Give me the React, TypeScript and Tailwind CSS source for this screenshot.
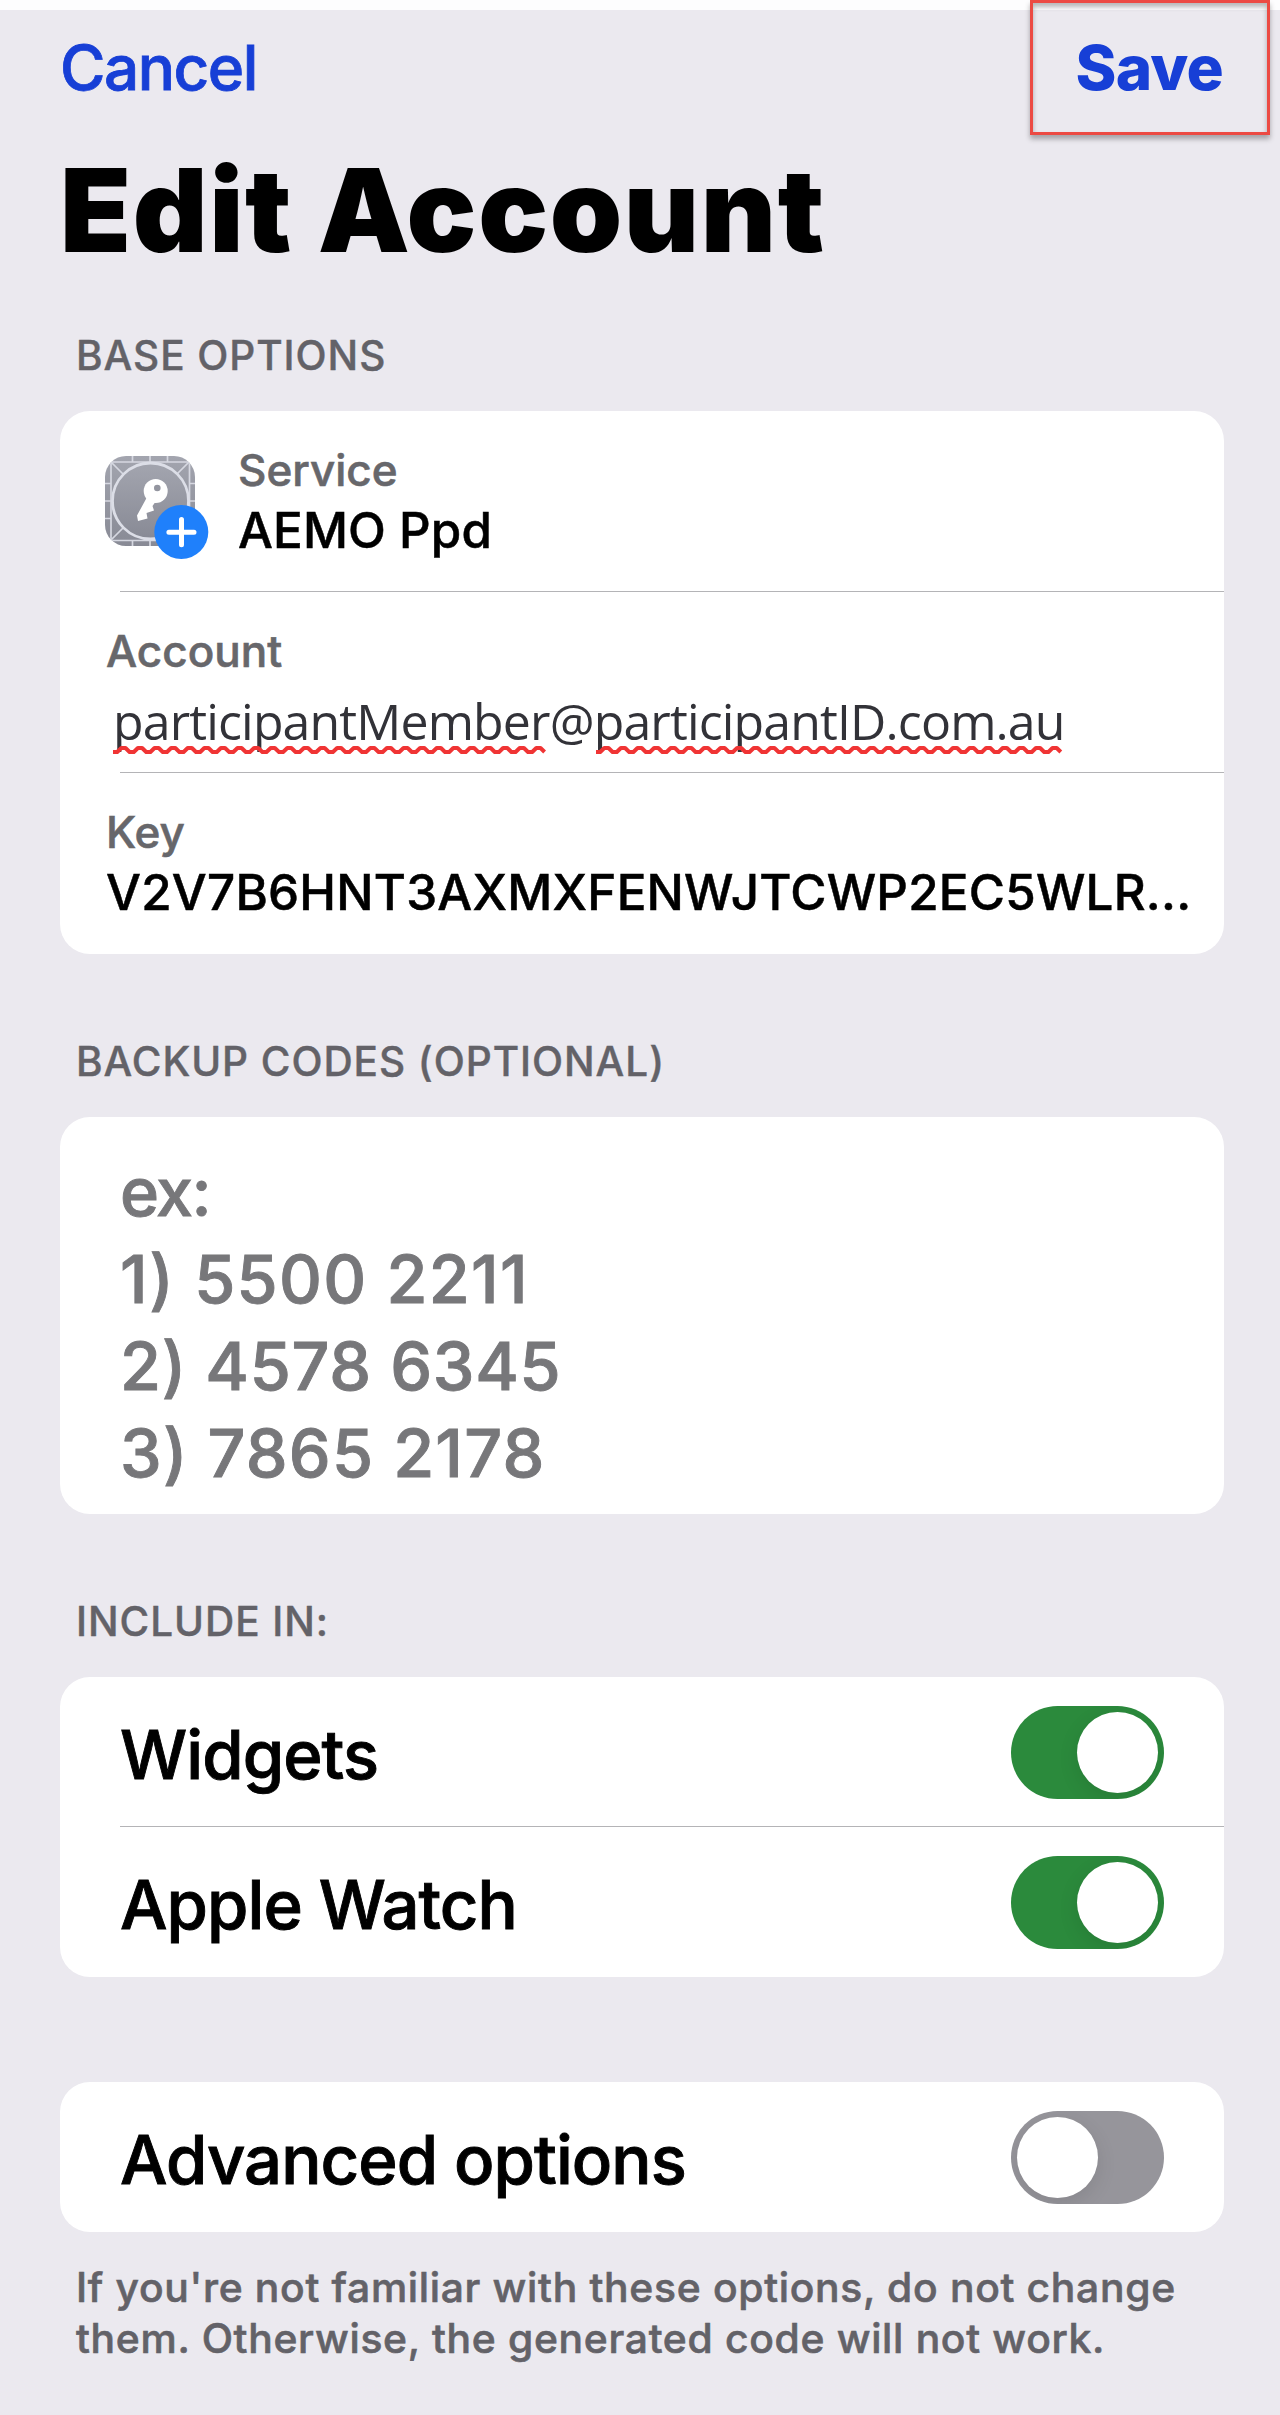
import { useState } from 'react';
import type { ReactNode } from 'react';

const backupPlaceholder = [
  { text: 'ex:', tracking: 'tracking-[-1.6px]' },
  { text: '1) 5500 2211', tracking: 'tracking-[1.3px]' },
  { text: '2) 4578 6345', tracking: 'tracking-[0.7px]' },
  { text: '3) 7865 2178', tracking: 'tracking-[1.2px]' }
];

function ServiceIcon() {
  return (
    <svg width="104" height="104" viewBox="0 0 104 104" className="shrink-0">
      <defs>
        <linearGradient id="tile" x1="0" y1="0" x2="0" y2="1">
          <stop offset="0" stopColor="#a3a5af" />
          <stop offset="1" stopColor="#888a95" />
        </linearGradient>
        <clipPath id="tile-clip">
          <rect width="90" height="90" rx="21" />
        </clipPath>
      </defs>
      <g clipPath="url(#tile-clip)">
        <rect width="90" height="90" fill="url(#tile)" />
        <g stroke="#d6d8e1" strokeWidth="1.7" fill="none">
          <path d="M6 0V90M84.5 0V90M0 6H90M0 84.5H90" />
          <path d="M27.5 0V6M45 0V6M62.5 0V6M27.5 84V90M45 84V90M62.5 84V90" />
          <path d="M0 27.5H6M0 45H6M0 62.5H6M84 27.5H90M84 45H90M84 62.5H90" />
          <path d="M6 6L18 18M84 6L72 18M6 84L18 72M84 84L72 72" />
        </g>
        <circle cx="45.5" cy="45" r="38" fill="url(#tile)" stroke="#dcdee7" strokeWidth="2.8" />
      </g>
      {/* Key */}
      <path
        d="M41 43L32 59.5L33 65L42.5 62.5L41.5 57L49 54.5L47.5 50L50 46.5L58 44L46 33Z"
        fill="#fff"
      />
      <circle cx="50.7" cy="35" r="12" fill="#fff" />
      <circle cx="52.3" cy="32" r="3.3" fill="#93959f" />
      {/* Add badge */}
      <circle cx="76.3" cy="76" r="27" fill="#1f80fb" />
      <path d="M76.5 63.5V88.7M63.9 76.3H89" stroke="#fff" strokeWidth="5" strokeLinecap="round" />
    </svg>
  );
}

function Squiggle({ width }: { width: number }) {
  const period = 16.6;
  let d = 'M0 7';
  for (let x = 0; x + period / 2 <= width; x += period) {
    d += ` L${(x + period / 4).toFixed(1)} 7 L${(x + period / 2).toFixed(1)} 3 L${(x + (period * 3) / 4).toFixed(1)} 3 L${(x + period).toFixed(1)} 7`;
  }
  return (
    <svg width={width} height="11" viewBox={`0 0 ${width} 11`} className="block">
      <path d={d} fill="none" stroke="#f03434" strokeWidth="4" strokeLinejoin="round" />
    </svg>
  );
}

function SectionLabel({ children }: { children: ReactNode }) {
  return (
    <h2 className="pl-4 pt-px mb-[31px] text-[40.5px] leading-[48px] font-medium tracking-[0.95px] text-[#636268] [-webkit-text-stroke:0.4px]">
      {children}
    </h2>
  );
}

function FieldLabel({ children }: { children: ReactNode }) {
  return (
    <div className="text-[44px] leading-[58px] font-medium text-[#67676b] [-webkit-text-stroke:0.6px]">
      {children}
    </div>
  );
}

function Divider() {
  return <div className="ml-[60px] h-px bg-[#b4b4b7]" />;
}

function Toggle({ on, onChange }: { on: boolean; onChange: (on: boolean) => void }) {
  return (
    <button
      role="switch"
      aria-checked={on}
      onClick={() => onChange(!on)}
      className={`flex w-[153px] h-[93px] p-1.5 rounded-full overflow-hidden ${
        on ? 'justify-end bg-[#2b8a3c]' : 'justify-start bg-[#96959b]'
      }`}
    >
      <span className="size-[81px] rounded-full bg-white shadow-[0_6px_20px_rgba(0,0,0,0.1)]" />
    </button>
  );
}

function ToggleRow({ label, on, onChange }: { label: string; on: boolean; onChange: (on: boolean) => void }) {
  return (
    <div className="flex h-[150px] items-center justify-between px-[60px]">
      <span className="pt-[5px] text-[67px] leading-[80px] font-medium tracking-[-0.95px] text-black [-webkit-text-stroke:0.9px]">
        {label}
      </span>
      <Toggle on={on} onChange={onChange} />
    </div>
  );
}

export default function App() {
  const [widgets, setWidgets] = useState(true);
  const [watch, setWatch] = useState(true);
  const [advanced, setAdvanced] = useState(false);

  return (
    <main className="w-[1280px] h-[2415px] overflow-hidden bg-[#ebe9ef] font-['Inter',sans-serif]">
      <div className="h-2.5 bg-[#fdfdfe]" />

      {/* Header */}
      <div className="flex h-[130px] items-start justify-between pl-[60px] pr-[57px] pt-[22px]">
        <button className="text-[62px] leading-[72px] font-medium tracking-[-1.5px] text-[#173fd6] [-webkit-text-stroke:0.8px]">
          Cancel
        </button>
        <div className="relative">
          <button className="text-[62px] leading-[72px] font-extrabold tracking-[-0.8px] text-[#173fd6]">Save</button>
          <div className="absolute right-[-47px] -top-8 w-[240px] h-[135px] border-[3px] border-[#ec4a43] shadow-[0_4px_5px_rgba(0,0,0,0.3),inset_0_4px_5px_rgba(0,0,0,0.28)]" />
        </div>
      </div>
      <h1 className="pl-[60px] text-[116px] leading-[140px] font-black tracking-[1.6px] text-black">
        Edit Account
      </h1>

      {/* Base options */}
      <section className="mt-[51px] pl-[60px] pr-14">
        <SectionLabel>BASE OPTIONS</SectionLabel>
        <div className="h-[543px] rounded-[30px] bg-white">
          <div className="flex h-[180px] pl-[45px]">
            <div className="pt-[45px]">
              <ServiceIcon />
            </div>
            <div className="pl-[29px] pt-[30px]">
              <FieldLabel>Service</FieldLabel>
              <div className="text-[49.3px] leading-[63px] font-medium tracking-[0.1px] text-black [-webkit-text-stroke:0.5px]">
                AEMO Ppd
              </div>
            </div>
          </div>
          <Divider />
          <div className="h-[180px] pl-[46px] pt-[30px]">
            <FieldLabel>Account</FieldLabel>
            <div className="relative pl-[7px] pt-[9px] font-['Open_Sans',sans-serif] text-[50px] leading-[64px] tracking-[-0.85px] text-[#323238]">
              participantMember@participantID.com.au
              <div className="absolute left-[7px] top-[65px] flex gap-[49px]">
                <Squiggle width={434} />
                <Squiggle width={468} />
              </div>
            </div>
          </div>
          <Divider />
          <div className="pl-[46px] pt-[30px]">
            <FieldLabel>Key</FieldLabel>
            <div className="whitespace-nowrap text-[49.3px] leading-[63px] font-medium tracking-[0.24px] text-black [-webkit-text-stroke:0.5px]">
              V2V7B6HNT3AXMXFENWJTCWP2EC5WLR...
            </div>
          </div>
        </div>
      </section>

      {/* Backup codes */}
      <section className="mt-[83px] pl-[60px] pr-14">
        <SectionLabel>BACKUP CODES (OPTIONAL)</SectionLabel>
        <div className="h-[397px] rounded-[30px] bg-white pl-[60px] pt-8">
          {backupPlaceholder.map((line) => (
            <div
              key={line.text}
              className={`text-[66.5px] leading-[87px] font-medium text-[#77777a] [-webkit-text-stroke:0.9px] ${line.tracking}`}
            >
              {line.text}
            </div>
          ))}
        </div>
      </section>

      {/* Include in */}
      <section className="mt-[83px] pl-[60px] pr-14">
        <SectionLabel>INCLUDE IN:</SectionLabel>
        <div className="h-[300px] rounded-[30px] bg-white">
          <ToggleRow label="Widgets" on={widgets} onChange={setWidgets} />
          <div className="-mt-px">
            <Divider />
          </div>
          <ToggleRow label="Apple Watch" on={watch} onChange={setWatch} />
        </div>
      </section>

      {/* Advanced */}
      <section className="mt-[105px] pl-[60px] pr-14">
        <div className="rounded-[30px] bg-white">
          <ToggleRow label="Advanced options" on={advanced} onChange={setAdvanced} />
        </div>
        <p className="mt-[30px] pl-4 whitespace-nowrap text-[40.8px] leading-[51px] font-medium tracking-[0.69px] text-[#636268] [-webkit-text-stroke:0.6px]">
          If you're not familiar with these options, do not change
          <br />
          them. Otherwise, the generated code will not work.
        </p>
      </section>
    </main>
  );
}
